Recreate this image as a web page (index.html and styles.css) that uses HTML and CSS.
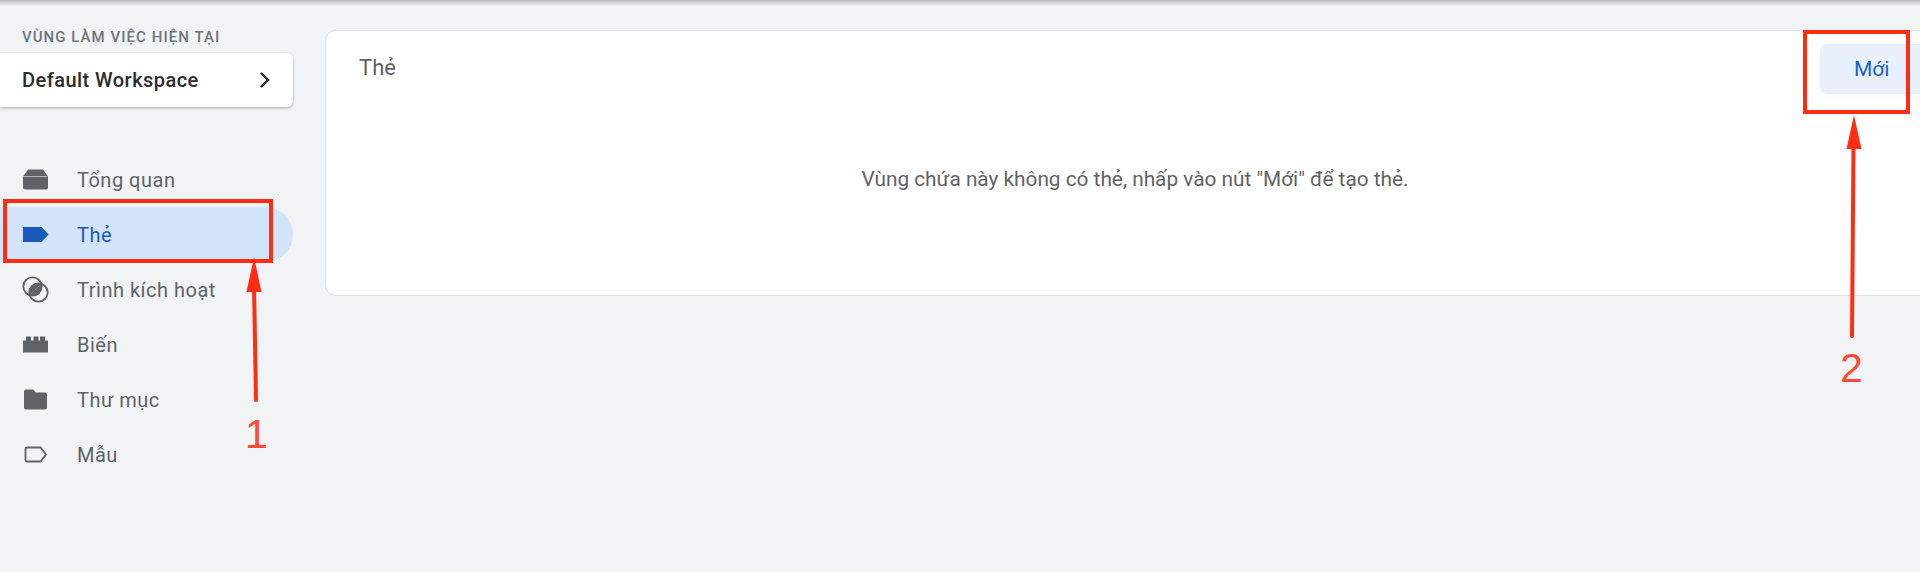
FILE: index.html
```html
<!DOCTYPE html>
<html lang="vi">
<head>
  <meta charset="UTF-8" />
  <title>Thẻ - Default Workspace</title>
  <link rel="stylesheet" href="styles.css">
</head>
<body>

  <div class="top-shadow"></div>

  <div class="page">
    <aside class="sidebar">
      <div class="workspace-label">VÙNG LÀM VIỆC HIỆN TẠI</div>
      <div class="workspace-card">
        <span>Default Workspace</span>
        <svg class="chevron" viewBox="0 0 12 18"><path d="M2 2l7 7-7 7" fill="none" stroke="#202124" stroke-width="2.4"/></svg>
      </div>

      <ul class="nav">
        <li class="nav-item">
          <svg class="nav-icon" viewBox="0 0 27 22"><path d="M6 1h15l5 7v11a2 2 0 0 1-2 2H3a2 2 0 0 1-2-2V8z" fill="#5f6368"/><path d="M1.500 8h24" stroke="#f1f3f4" stroke-width="1" opacity="0.6"/></svg>
          <span>Tổng quan</span>
        </li>
        <li class="nav-item active">
          <svg class="nav-icon" viewBox="0 0 27 22"><path d="M1 3.500h18.500l7 7.500-7 7.500H1z" fill="#185abc"/></svg>
          <span>Thẻ</span>
        </li>
        <li class="nav-item">
          <svg class="nav-icon" viewBox="0 0 27 27"><circle cx="10.500" cy="10.500" r="9.200" fill="none" stroke="#5f6368" stroke-width="1.800"/><circle cx="16.500" cy="16.500" r="9.200" fill="none" stroke="#5f6368" stroke-width="1.800"/><path d="M16.500 7.300a9.200 9.200 0 0 0-9.200 9.200q0 1.300.4 2.600l11.400-11.400q-1.300-.4-2.600-.4zM19.300 7.700L7.700 19.300a9.200 9.200 0 0 0 11.600-11.600z" fill="#5f6368"/></svg>
          <span>Trình kích hoạt</span>
        </li>
        <li class="nav-item">
          <svg class="nav-icon" viewBox="0 0 27 18"><path d="M1 17V5h3V1h5v4h2.500V1h5v4H18V1h5v4h3v12z" fill="#5f6368"/></svg>
          <span>Biến</span>
        </li>
        <li class="nav-item">
          <svg class="nav-icon" viewBox="0 0 27 22"><path d="M4 1h7l3 3h9a2 2 0 0 1 2 2v13a2 2 0 0 1-2 2H4a2 2 0 0 1-2-2V3a2 2 0 0 1 2-2z" fill="#5f6368"/></svg>
          <span>Thư mục</span>
        </li>
        <li class="nav-item">
          <svg class="nav-icon" viewBox="0 0 27 22"><path d="M5 4h13.500l5.500 7-5.500 7H5a1.500 1.500 0 0 1-1.500-1.500v-11A1.500 1.500 0 0 1 5 4z" fill="none" stroke="#5f6368" stroke-width="1.800"/></svg>
          <span>Mẫu</span>
        </li>
      </ul>
    </aside>

    <main class="content">
      <section class="tags-card">
        <div class="tags-header">
          <h2>Thẻ</h2>
          <button class="new-btn">Mới</button>
        </div>
        <p class="empty-msg">Vùng chứa này không có thẻ, nhấp vào nút "Mới" để tạo thẻ.</p>
      </section>
    </main>
  </div>

  <!-- red annotations drawn over the page -->
  <svg class="marks" viewBox="0 0 1920 572">
    <rect x="5" y="201" width="266" height="60" fill="none" stroke="#ff2d12" stroke-width="4"/>
    <path d="M256 400L254 285" stroke="#ff2d12" stroke-width="4" stroke-linecap="round"/>
    <path d="M254 257l7.500 35h-15z" fill="#ff2d12"/>
    <rect x="1805" y="32" width="103" height="80" fill="none" stroke="#ff2d12" stroke-width="4"/>
    <path d="M1852 336L1853.500 145" stroke="#ff2d12" stroke-width="4" stroke-linecap="round"/>
    <path d="M1854 115l7.500 34h-15z" fill="#ff2d12"/>
  </svg>
  <span class="mark-num num-one">1</span>
  <span class="mark-num num-two">2</span>

</body>
</html>
```

FILE: styles.css
```css
html, body {
  height: 100%;
  margin: 0;
  padding: 0;
  font-family: Roboto, Arial, sans-serif;
  background: #f1f3f4;
  overflow: hidden;
  position: relative;
}

.top-shadow {
  position: absolute;
  top: 0;
  left: 0;
  width: 100%;
  height: 6px;
  background: linear-gradient(#b9babc, #f1f3f4);
}

.page {
  display: flex;
  height: 100%;
}

.sidebar {
  flex: none;
  width: 293px;
  padding-top: 29px;
}

.workspace-label {
  padding-left: 22px;
  font-size: 15px;
  line-height: 16px;
  letter-spacing: 1.05px;
  font-weight: 500;
  color: #70757a;
}

.workspace-card {
  display: flex;
  align-items: center;
  justify-content: space-between;
  height: 54px;
  margin-top: 8px;
  padding: 0 22px;
  background: #fff;
  border-radius: 0 6px 6px 0;
  box-shadow: 0 1px 3px rgba(60, 64, 67, 0.4);
  font-size: 20px;
  font-weight: 500;
  letter-spacing: 0.45px;
  color: #2b2c2f;
}

.chevron {
  width: 12px;
  height: 18px;
}

.nav {
  list-style: none;
  margin: 45px 0 0;
  padding: 0;
}

.nav-item {
  display: flex;
  align-items: center;
  height: 55px;
  padding-left: 22px;
  font-size: 20px;
  letter-spacing: 0.5px;
  color: #5f6368;
}

.nav-item.active {
  background: #d2e3fc;
  border-radius: 0 28px 28px 0;
  color: #185abc;
}

.nav-icon {
  flex: none;
  width: 27px;
  height: 27px;
  margin-right: 28px;
}

.content {
  flex: 1;
  min-width: 0;
  padding: 30px 0 0 32px;
}

.tags-card {
  width: 1620px;
  height: 266px;
  box-sizing: border-box;
  background: #fff;
  border: 1px solid #e0e2e4;
  border-radius: 11px;
}

.tags-header {
  display: flex;
  justify-content: space-between;
  padding: 13px 0 0 33px;
}

.tags-header h2 {
  margin: 12px 0 0;
  font-size: 22px;
  line-height: 24px;
  font-weight: 400;
  color: #5f6368;
}

.new-btn {
  width: 124px;
  height: 50px;
  padding: 0 0 0 34px;
  text-align: left;
  border: none;
  border-radius: 7px;
  background: #e8f0fe;
  color: #1a5fc8;
  font-family: Roboto, Arial, sans-serif;
  font-size: 21px;
  font-weight: 400;
}

.empty-msg {
  margin: 73px 0 0;
  text-align: center;
  font-size: 20.8px;
  line-height: 24px;
  color: #5f6368;
}

.marks {
  position: absolute;
  top: 0;
  left: 0;
  width: 1920px;
  height: 572px;
}

.mark-num {
  position: absolute;
  font-family: "Liberation Sans", Arial, sans-serif;
  font-size: 41px;
  line-height: 48px;
  color: #ff4a3a;
}

.num-one {
  left: 245px;
  top: 410px;
}

.num-two {
  left: 1840px;
  top: 344px;
}
```
